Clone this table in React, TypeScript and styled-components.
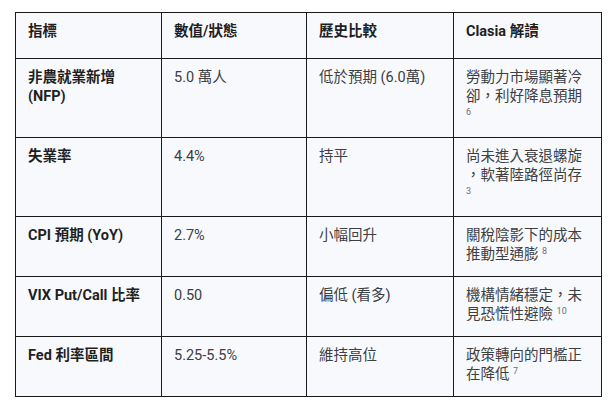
import React from "react";
import styled, { createGlobalStyle } from "styled-components";

const Global = createGlobalStyle`
  html, body { margin: 0; padding: 0; background: #ffffff; }
  body { font-family: Roboto, "Noto Sans CJK TC", "Noto Sans", sans-serif; }
`;

const Page = styled.div`
  padding: 12px 10px 0 15px;
`;

const Table = styled.table`
  width: 586px;
  table-layout: fixed;
  border-collapse: collapse;
  background: #f8f9fd;
  font-size: 14.5px;
  line-height: 19px;
`;

const HeadCell = styled.th`
  border: 1px solid #1a1a1a;
  padding: 9px 10px 17px 12px;
  text-align: left;
  vertical-align: top;
  font-weight: 700;
  color: #1f1f1f;
`;

const Cell = styled.td<{ $strong?: boolean; $note?: boolean }>`
  border: 1px solid #1a1a1a;
  padding: 9px ${(p) => (p.$note ? "17px" : "10px")} 12px 12px;
  vertical-align: top;
  font-weight: ${(p) => (p.$strong ? 700 : 400)};
  color: ${(p) => (p.$strong ? "#1f1f1f" : "#3c4043")};
  line-break: ${(p) => (p.$note ? "anywhere" : "auto")};
`;

const Ref = styled.sup`
  font-size: 9px;
  line-height: 0;
  color: #6b6f73;
  font-weight: 400;
  vertical-align: 5px;
`;

type Row = { name: string; value: string; history: string; note: string; ref: string };

const rows: Row[] = [
  { name: "非農就業新增 (NFP)", value: "5.0 萬人", history: "低於預期 (6.0萬)", note: "勞動力市場顯著冷卻，利好降息預期", ref: "6" },
  { name: "失業率", value: "4.4%", history: "持平", note: "尚未進入衰退螺旋，軟著陸路徑尚存", ref: "3" },
  { name: "CPI 預期 (YoY)", value: "2.7%", history: "小幅回升", note: "關稅陰影下的成本推動型通膨", ref: "8" },
  { name: "VIX Put/Call 比率", value: "0.50", history: "偏低 (看多)", note: "機構情緒穩定，未見恐慌性避險", ref: "10" },
  { name: "Fed 利率區間", value: "5.25-5.5%", history: "維持高位", note: "政策轉向的門檻正在降低", ref: "7" },
];

export default function App() {
  return (
    <Page>
      <Global />
      <Table>
        <colgroup>
          <col style={{ width: 146 }} />
          <col style={{ width: 145 }} />
          <col style={{ width: 147 }} />
          <col style={{ width: 148 }} />
        </colgroup>
        <thead>
          <tr>
            <HeadCell>指標</HeadCell>
            <HeadCell>數值/狀態</HeadCell>
            <HeadCell>歷史比較</HeadCell>
            <HeadCell>Clasia 解讀</HeadCell>
          </tr>
        </thead>
        <tbody>
          {rows.map((r) => (
            <tr key={r.name}>
              <Cell $strong>{r.name}</Cell>
              <Cell>{r.value}</Cell>
              <Cell>{r.history}</Cell>
              <Cell $note>
                {r.note} <Ref>{r.ref}</Ref>
              </Cell>
            </tr>
          ))}
        </tbody>
      </Table>
    </Page>
  );
}
